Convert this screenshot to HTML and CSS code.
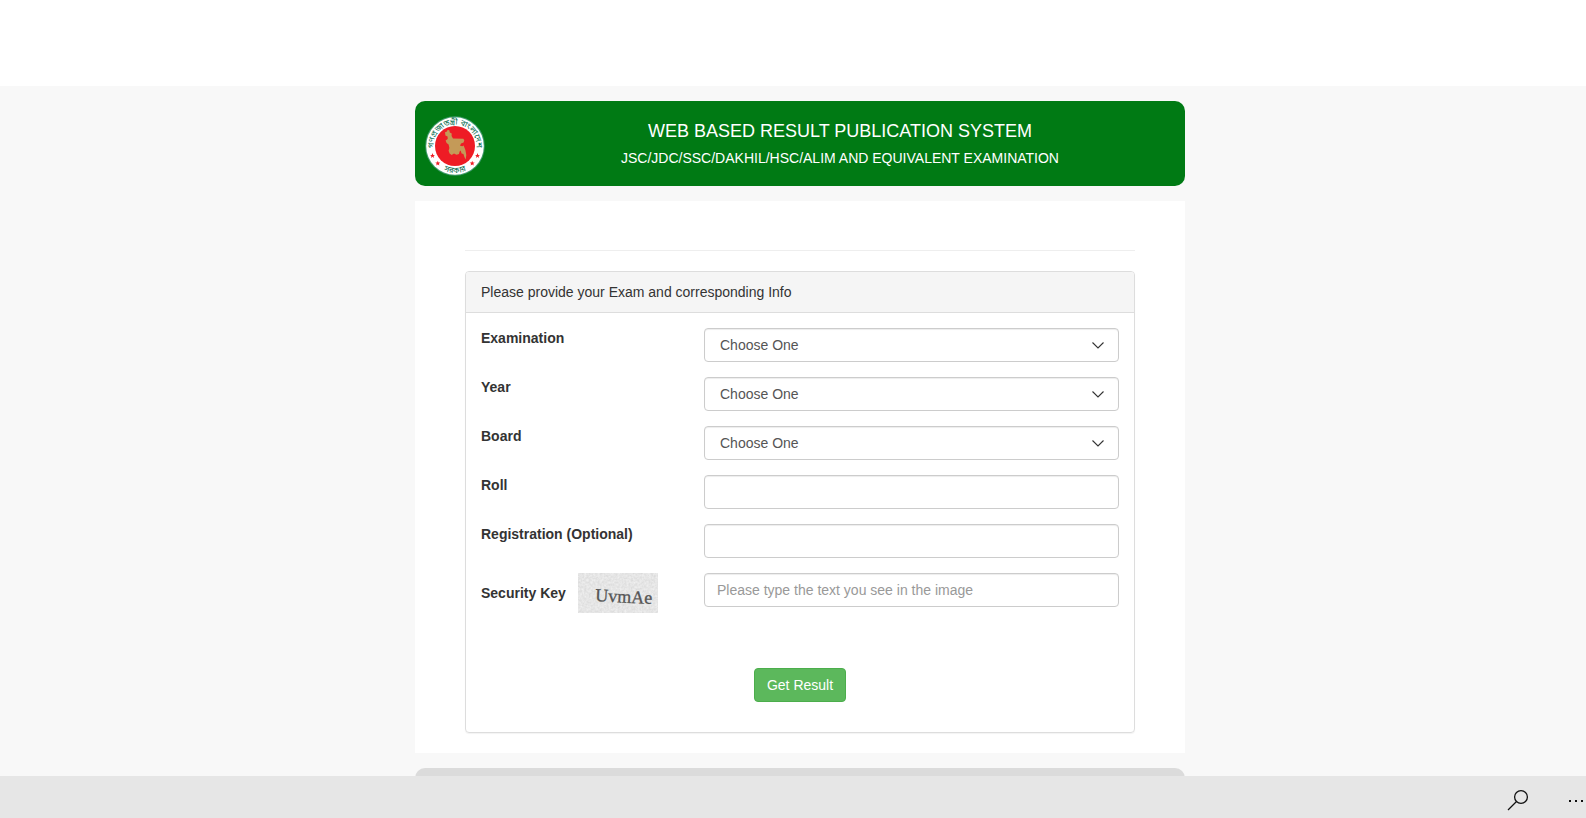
FILE: index.html
```html
<!DOCTYPE html>
<html lang="en">
<head>
    <meta charset="UTF-8">
    <meta name="viewport" content="width=device-width, initial-scale=1.0">
    <title>Web Based Result Publication System</title>
    <link rel="stylesheet" href="styles.css">
</head>
<body>
    <div class="top-space"></div>

    <div class="page">
    <div class="container">
        <header class="banner">
            <svg class="emblem" viewBox="0 0 60 60" role="img" aria-label="Government emblem">
                <defs>
                    <path id="arc-top" d="M9.8 37.4 A21.5 21.5 0 1 1 50.2 37.4"/>
                    <path id="arc-bottom" d="M10 48 A27 27 0 0 0 50 48"/>
                    <path id="star" d="M0 -2.6 L0.7 -0.8 L2.5 -0.8 L1.1 0.4 L1.6 2.2 L0 1.1 L-1.6 2.2 L-1.1 0.4 L-2.5 -0.8 L-0.7 -0.8 Z"/>
                </defs>
                <circle cx="30" cy="30" r="29.8" fill="#3f9a6b"/>
                <circle cx="30" cy="30" r="28.8" fill="#fff"/>
                <circle cx="30" cy="30" r="20" fill="#ee1c25"/>
                <path fill="#c49a58" d="M20 16.3 L22 15.6 L22.5 14 L24.3 14.2 L24.8 16.6 L26.7 17.6 L26.6 20 L28 22.4 L38.3 22.8 L39.3 24.2 L38.6 26.4 L36 27.4 L35 29.7 L37.3 30.2 L38.6 29.4 L40.4 34 L41.3 39 L40.7 43.4 L39.4 41 L38.4 38 L36.6 37.4 L35.6 34.4 L34.6 35.4 L34 38 L31.5 38.8 L29 37.6 L26.7 39 L24.6 37.6 L23.6 34.7 L24.4 32 L23.6 28.4 L21.6 27 L20.6 24.6 L22.7 23 L22.6 20.6 L20.4 19.6 Z"/>
                <g fill="#ee1c25">
                    <use href="#star" x="7.5" y="39.7"/>
                    <use href="#star" x="12.8" y="47.3"/>
                    <use href="#star" x="47.2" y="47.3"/>
                    <use href="#star" x="52.5" y="39.7"/>
                </g>
                <text class="emblem-text"><textPath href="#arc-top" startOffset="50%" text-anchor="middle">গণপ্রজাতন্ত্রী বাংলাদেশ</textPath></text>
                <text class="emblem-text"><textPath href="#arc-bottom" startOffset="50%" text-anchor="middle">সরকার</textPath></text>
            </svg>
            <div class="banner-text">
                <h1>WEB BASED RESULT PUBLICATION SYSTEM</h1>
                <p>JSC/JDC/SSC/DAKHIL/HSC/ALIM AND EQUIVALENT EXAMINATION</p>
            </div>
        </header>

        <main class="content">
            <hr>
            <form class="panel">
                <div class="panel-heading">Please provide your Exam and corresponding Info</div>
                <div class="panel-body">
                    <div class="form-row">
                        <label for="exam">Examination</label>
                        <div class="select-wrap">
                            <select id="exam" class="form-control">
                                <option>Choose One</option>
                            </select>
                            <svg class="chevron" viewBox="0 0 12 8"><path d="M0.5 1.5 L6 7 L11.5 1.5"/></svg>
                        </div>
                    </div>
                    <div class="form-row">
                        <label for="year">Year</label>
                        <div class="select-wrap">
                            <select id="year" class="form-control">
                                <option>Choose One</option>
                            </select>
                            <svg class="chevron" viewBox="0 0 12 8"><path d="M0.5 1.5 L6 7 L11.5 1.5"/></svg>
                        </div>
                    </div>
                    <div class="form-row">
                        <label for="board">Board</label>
                        <div class="select-wrap">
                            <select id="board" class="form-control">
                                <option>Choose One</option>
                            </select>
                            <svg class="chevron" viewBox="0 0 12 8"><path d="M0.5 1.5 L6 7 L11.5 1.5"/></svg>
                        </div>
                    </div>
                    <div class="form-row">
                        <label for="roll">Roll</label>
                        <input id="roll" class="form-control" type="text">
                    </div>
                    <div class="form-row">
                        <label for="reg">Registration (Optional)</label>
                        <input id="reg" class="form-control" type="text">
                    </div>
                    <div class="form-row">
                        <div class="security">
                            <label for="captcha">Security Key</label>
                            <svg class="captcha" viewBox="0 0 80 40">
                                <filter id="grain" x="0" y="0" width="100%" height="100%" color-interpolation-filters="sRGB">
                                    <feTurbulence type="fractalNoise" baseFrequency="0.45" numOctaves="2" seed="4"/>
                                    <feColorMatrix values="0.12 0 0 0 0.84  0.12 0 0 0 0.84  0.12 0 0 0 0.84  0 0 0 0 1"/>
                                </filter>
                                <rect width="80" height="40" filter="url(#grain)"/>
                                <text x="17" y="28" transform="rotate(3 17 28)">UvmAe</text>
                            </svg>
                        </div>
                        <input id="captcha" class="form-control" type="text" placeholder="Please type the text you see in the image">
                    </div>
                    <div class="actions">
                        <button type="submit" class="btn">Get Result</button>
                    </div>
                </div>
            </form>
        </main>

        <footer class="footer"></footer>
    </div>
    </div>

    <!-- Bottom app bar -->
    <div class="app-bar">
        <button type="button" aria-label="Search">
            <svg width="22" height="22" viewBox="0 0 22 22" fill="none" stroke="#111" stroke-width="1.3"><circle cx="14" cy="8" r="6.4"/><path d="M9.5 12.5 L1 21"/></svg>
        </button>
        <button type="button" aria-label="More">
            <svg width="14" height="4" viewBox="0 0 14 4" fill="#111"><path d="M0 2h2v2h-2z M6 2h2v2h-2z M12 2h2v2h-2z"/></svg>
        </button>
    </div>
</body>
</html>
```
FILE: styles.css
```css
* {
    box-sizing: border-box;
}
body {
    margin: 0;
    background-color: #f8f8f8;
    color: #333;
    font-family: "Liberation Sans", Arial, sans-serif;
    font-size: 14px;
    line-height: 20px;
}
.top-space {
    height: 86px;
    background-color: #fff;
}
.page {
    padding: 15px 0 0 14px;
}
.container {
    max-width: 770px;
    margin: 0 auto;
}

/* Green header */
.banner {
    display: flex;
    align-items: flex-start;
    padding: 15px 0 10px 10px;
    background-color: #007a14;
    border-radius: 10px;
    color: #fff;
}
.emblem {
    flex: none;
    width: 60px;
    height: 60px;
    margin-right: 10px;
}
.emblem-text {
    font-family: "Noto Sans Bengali", "Noto Sans", sans-serif;
    font-size: 8px;
    fill: #006a4e;
}
.banner-text {
    flex: 1;
    padding-top: 5px;
    text-align: center;
}
.banner-text h1 {
    margin: 0 0 7px;
    font-size: 18px;
    font-weight: normal;
    line-height: 20px;
}
.banner-text p {
    margin: 0;
}

/* White content area */
.content {
    margin-top: 15px;
    padding: 49px 50px 20px;
    background-color: #fff;
}
hr {
    margin: 0 0 20px;
    border: 0;
    border-top: 1px solid #eee;
}
.panel {
    border: 1px solid #ddd;
    border-radius: 4px;
    box-shadow: 0 1px 1px rgba(0, 0, 0, 0.05);
}
.panel-heading {
    padding: 10px 15px;
    background-color: #f5f5f5;
    border-bottom: 1px solid #ddd;
    border-radius: 3px 3px 0 0;
}
.panel-body {
    padding: 15px 15px 30px;
}
.form-row {
    display: grid;
    grid-template-columns: 223px 1fr;
    align-items: start;
    margin-bottom: 15px;
}
label {
    font-weight: bold;
}
.form-control {
    display: block;
    width: 100%;
    height: 34px;
    padding: 6px 12px;
    border: 1px solid #ccc;
    border-radius: 4px;
    background-color: #fff;
    box-shadow: inset 0 1px 1px rgba(0, 0, 0, 0.075);
    color: #555;
    font-family: inherit;
    font-size: 14px;
    line-height: 20px;
}
.form-control::placeholder {
    color: #999;
}
.select-wrap {
    position: relative;
}
select.form-control {
    appearance: none;
    padding: 6px 15px;
}
.chevron {
    position: absolute;
    top: 13px;
    right: 15px;
    width: 12px;
    height: 8px;
    fill: none;
    stroke: #333;
    stroke-width: 1.1;
    pointer-events: none;
}
.security {
    display: flex;
    align-items: center;
    gap: 12px;
}
.captcha {
    width: 80px;
    height: 40px;
}
.captcha text {
    font-family: "Liberation Serif", serif;
    font-size: 18px;
    fill: #555;
    stroke: #555;
    stroke-width: 0.3;
}
.actions {
    margin-top: 55px;
    text-align: center;
}
.btn {
    height: 34px;
    padding: 6px 12px;
    border: 1px solid #4cae4c;
    border-radius: 4px;
    background-color: #5cb85c;
    color: #fff;
    font-family: inherit;
    font-size: 14px;
    line-height: 20px;
    cursor: pointer;
}
.footer {
    height: 40px;
    margin-top: 15px;
    background-color: #dbdbdb;
    border-radius: 10px;
}

/* Bar at the bottom of the window */
.app-bar {
    position: fixed;
    right: 0;
    bottom: 0;
    left: 0;
    display: flex;
    justify-content: flex-end;
    align-items: center;
    gap: 40px;
    height: 42px;
    padding: 6px 3px 0 0;
    background-color: #e6e6e6;
}
.app-bar button {
    display: flex;
    padding: 0;
    border: 0;
    background: none;
}
```
